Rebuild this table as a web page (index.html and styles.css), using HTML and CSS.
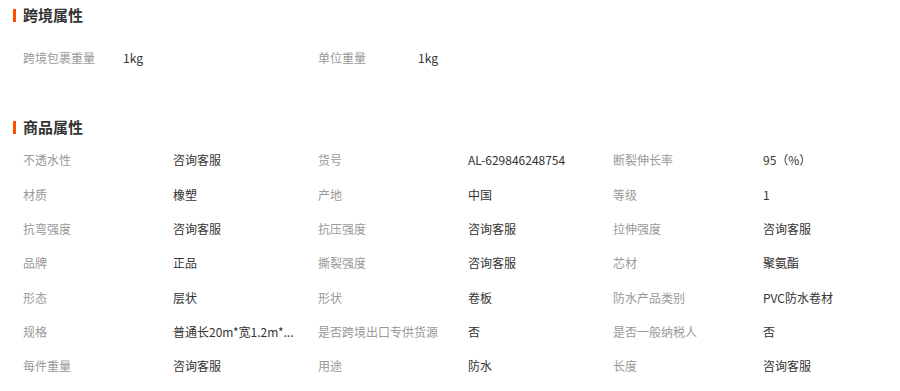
FILE: index.html
```html
<!DOCTYPE html>
<html lang="zh">
<head>
<meta charset="utf-8">
<link rel="stylesheet" href="styles.css">
</head>
<body>
<section class="sec">
  <h2 class="title">跨境属性</h2>
  <div class="grid cross">
    <div class="item"><span class="label">跨境包裹重量</span><span class="value">1kg</span></div>
    <div class="item"><span class="label">单位重量</span><span class="value">1kg</span></div>
  </div>
</section>
<section class="sec sec2">
  <h2 class="title">商品属性</h2>
  <div class="grid">
    <div class="item"><span class="label">不透水性</span><span class="value">咨询客服</span></div>
    <div class="item"><span class="label">货号</span><span class="value">AL-629846248754</span></div>
    <div class="item"><span class="label">断裂伸长率</span><span class="value">95（%）</span></div>
    <div class="item"><span class="label">材质</span><span class="value">橡塑</span></div>
    <div class="item"><span class="label">产地</span><span class="value">中国</span></div>
    <div class="item"><span class="label">等级</span><span class="value">1</span></div>
    <div class="item"><span class="label">抗弯强度</span><span class="value">咨询客服</span></div>
    <div class="item"><span class="label">抗压强度</span><span class="value">咨询客服</span></div>
    <div class="item"><span class="label">拉伸强度</span><span class="value">咨询客服</span></div>
    <div class="item"><span class="label">品牌</span><span class="value">正品</span></div>
    <div class="item"><span class="label">撕裂强度</span><span class="value">咨询客服</span></div>
    <div class="item"><span class="label">芯材</span><span class="value">聚氨酯</span></div>
    <div class="item"><span class="label">形态</span><span class="value">层状</span></div>
    <div class="item"><span class="label">形状</span><span class="value">卷板</span></div>
    <div class="item"><span class="label">防水产品类别</span><span class="value">PVC防水卷材</span></div>
    <div class="item"><span class="label">规格</span><span class="value">普通长20m*宽1.2m*...</span></div>
    <div class="item"><span class="label">是否跨境出口专供货源</span><span class="value">否</span></div>
    <div class="item"><span class="label">是否一般纳税人</span><span class="value">否</span></div>
    <div class="item"><span class="label">每件重量</span><span class="value">咨询客服</span></div>
    <div class="item"><span class="label">用途</span><span class="value">防水</span></div>
    <div class="item"><span class="label">长度</span><span class="value">咨询客服</span></div>
  </div>
</section>
</body>
</html>
```
FILE: styles.css
```css
html, body {
  margin: 0;
  padding: 0;
  background: #fff;
}
body {
  font-family: "Noto Sans CJK SC", "Liberation Sans", sans-serif;
  font-size: 12px;
  color: #333;
  padding: 5px 0 0 13px;
}
.sec {
  margin: 0;
}
.sec2 {
  margin-top: 35px;
}
.title {
  position: relative;
  margin: 0;
  font-size: 15px;
  font-weight: bold;
  color: #333;
  line-height: 20px;
  height: 20px;
  padding-left: 10px;
}
.title::before {
  content: "";
  position: absolute;
  left: 0;
  top: 4px;
  width: 3px;
  height: 13px;
  background: #ff5000;
}
.grid {
  display: grid;
  grid-template-columns: repeat(3, 295px);
  padding-left: 10px;
  margin-top: 13px;
}
.cross {
  margin-top: 23px;
}
.item {
  display: flex;
  height: 34.33px;
  align-items: flex-start;
  line-height: 20px;
}
.label {
  width: 150px;
  flex: none;
  color: #999;
  white-space: nowrap;
}
.cross .label {
  width: 100px;
}
.value {
  color: #333;
  white-space: nowrap;
}
```
